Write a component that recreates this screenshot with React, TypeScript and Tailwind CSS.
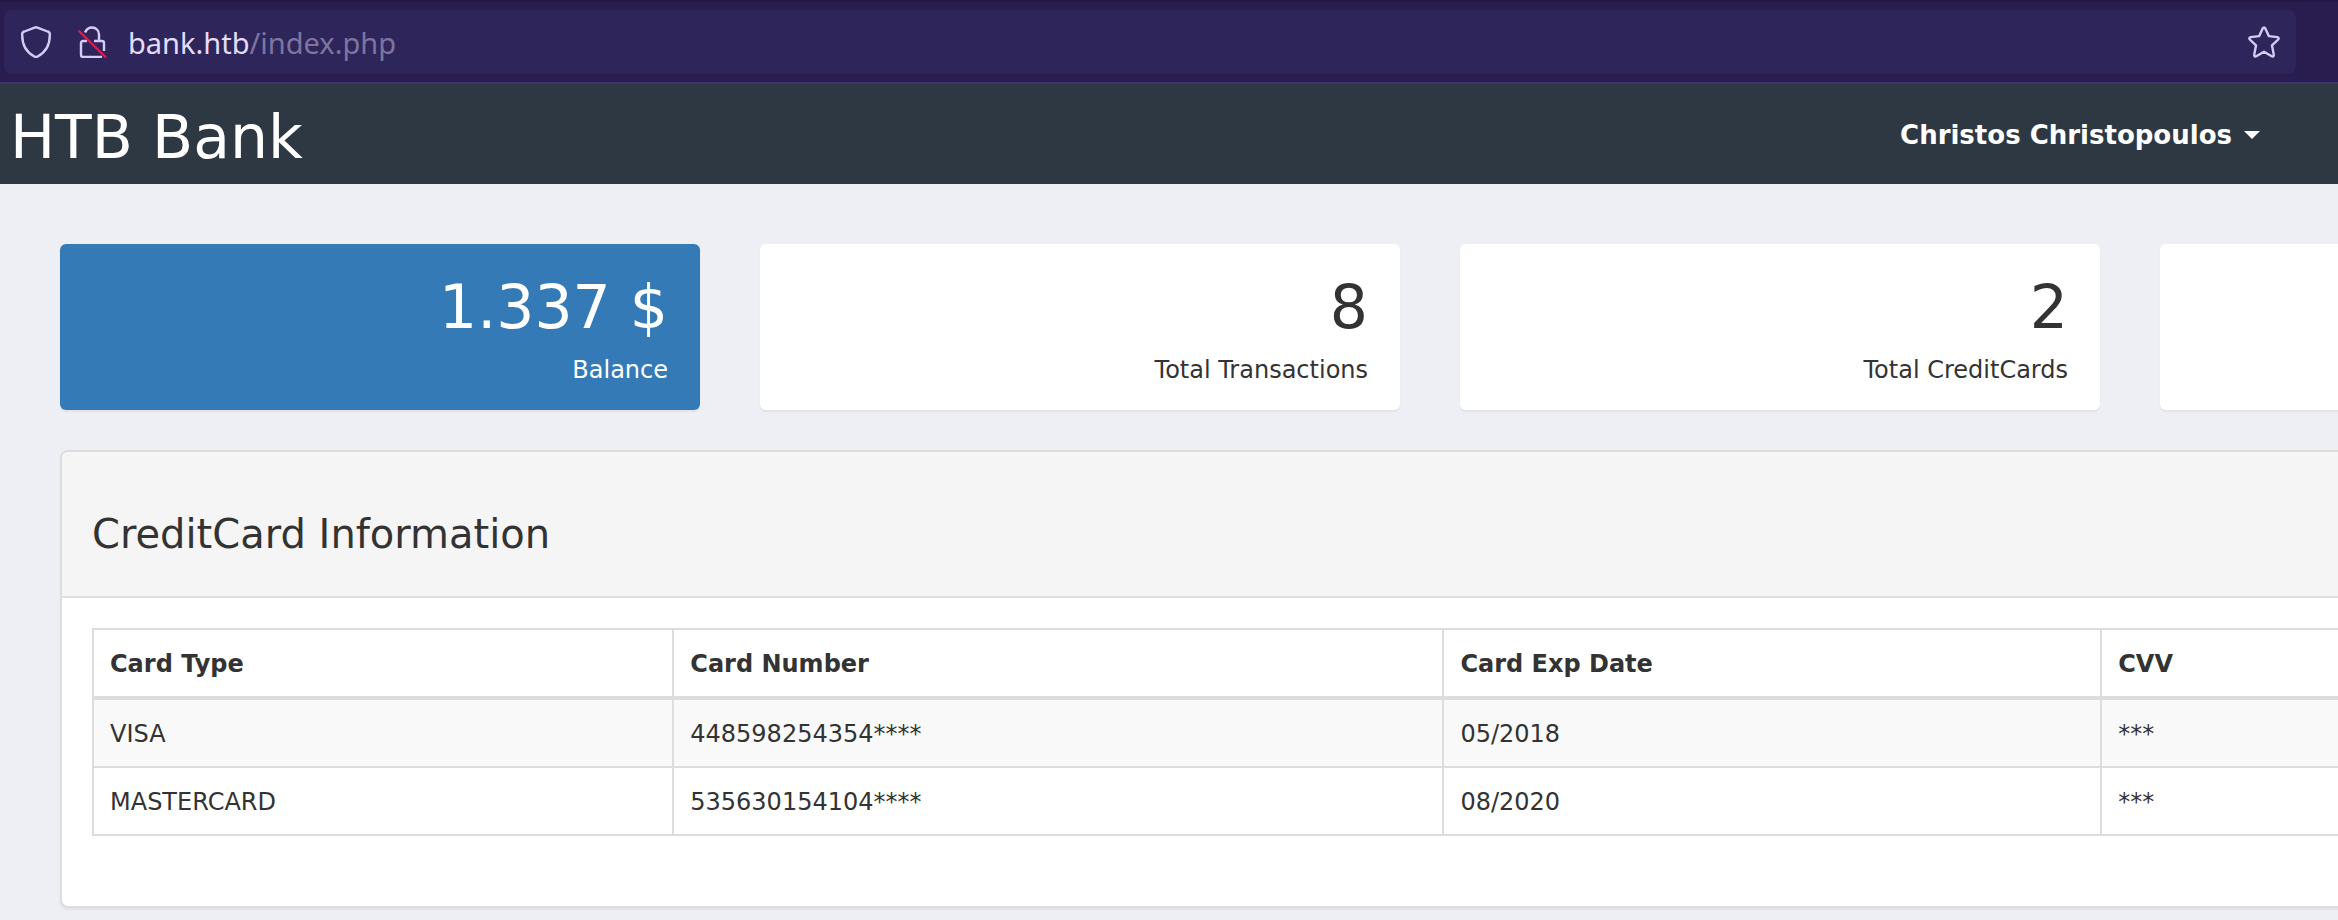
import React from "react";

const stats = [
  { value: "1.337 $", label: "Balance", primary: true },
  { value: "8", label: "Total Transactions", primary: false },
  { value: "2", label: "Total CreditCards", primary: false },
  { value: "", label: "", primary: false },
];

const cards = [
  { type: "VISA", number: "448598254354****", exp: "05/2018", cvv: "***" },
  { type: "MASTERCARD", number: "535630154104****", exp: "08/2020", cvv: "***" },
];

function ShieldIcon() {
  return (
    <svg viewBox="0 0 32 32" className="size-8" fill="none" stroke="currentColor" strokeWidth="2.4" strokeLinejoin="round" aria-hidden="true">
      <path d="M14.6 1.7a3 3 0 0 1 2.8 0L27.600 5.500a3 3 0 0 1 2.200 3C30 18 27 25.500 17.600 30.500a3 3 0 0 1-3.200 0C5 25.500 2 18 2.200 8.500a3 3 0 0 1 2.200-3Z" />
    </svg>
  );
}

function InsecureLockIcon() {
  return (
    <svg viewBox="0 0 32 32" className="size-8" fill="none" strokeWidth="2.4" aria-hidden="true">
      <g stroke="currentColor">
        <path d="M9 6.500C10.500 3 13 1.500 16 1.500c4 0 7 3 7 7V15" />
        <path d="M11 15H7a2 2 0 0 0-2 2v12a2 2 0 0 0 2 2h19" />
        <path d="M18 15h8a2 2 0 0 1 2 2v8" />
      </g>
      <path d="M2.500 4.500 30 31.500" stroke="#f5104a" strokeWidth="2.4" />
    </svg>
  );
}

function StarIcon() {
  return (
    <svg viewBox="0 0 32 32" className="size-8" fill="none" stroke="currentColor" strokeWidth="2.4" strokeLinejoin="round" aria-hidden="true">
      <path d="M14.700 2.400a1.500 1.500 0 0 1 2.600 0l3.500 7.700 8.600 1a1.400 1.400 0 0 1 .8 2.400l-6.200 5.900 1.800 9.400a1.400 1.400 0 0 1-2.100 1.500L16 25.700l-7.700 4.600a1.400 1.400 0 0 1-2.100-1.500L8 19.400l-6.200-5.900a1.400 1.400 0 0 1 .8-2.400l8.600-1Z" />
    </svg>
  );
}

export default function App() {
  return (
    <div className="min-h-screen overflow-hidden bg-[#edeff4] font-['DejaVu_Sans',sans-serif] text-2xl/[34px] text-[#333]">
      <div className="border-t-2 border-b-2 border-t-[#241a45] border-b-[#3b3470] bg-[#291d4f] pt-2 pr-[42px] pb-2 pl-1">
        <div className="flex h-16 items-center rounded-lg bg-[#2e255b] px-4 text-[#d5ccf5]">
          <button type="button" aria-label="Tracking protection" className="mr-6">
            <ShieldIcon />
          </button>
          <button type="button" aria-label="Connection not secure" className="mr-5">
            <InsecureLockIcon />
          </button>
          <div
            role="textbox"
            aria-label="Address"
            className="min-w-0 grow pt-0.5 font-['Noto_Sans',sans-serif] text-[29px]/[38px] text-[#7e759f]"
          >
            <span className="text-[#e3dcfb]">bank.htb</span>/index.php
          </div>
          <button type="button" aria-label="Bookmark this page">
            <StarIcon />
          </button>
        </div>
      </div>

      <header className="flex h-[100px] items-center justify-between bg-[#2e3842] pr-[78px] pl-[10px] text-white">
        <a href="#" className="pt-1.5 text-6xl/[66px]">
          HTB Bank
        </a>
        <button type="button" className="flex items-center gap-3 pt-0.5 text-[26px] font-bold">
          Christos Christopoulos
          <svg viewBox="0 0 16 8" className="h-2 w-4" fill="currentColor" aria-hidden="true">
            <path d="M0 0h16L8 8Z" />
          </svg>
        </button>
      </header>

      <main className="w-[122.33%] px-[60px] pt-[60px]">
        <section className="grid grid-cols-4 gap-[60px]">
          {stats.map((stat, i) => (
            <div
              key={i}
              className={
                stat.primary
                  ? "h-[166px] rounded-md bg-[#337ab7] px-8 pt-[30px] text-right text-white shadow-[0_2px_2px_rgba(0,0,0,0.05)]"
                  : "h-[166px] rounded-md bg-white px-8 pt-[30px] text-right shadow-[0_2px_2px_rgba(0,0,0,0.05)]"
              }
            >
              <div className="mb-[13px] text-6xl/[66px]">{stat.value}</div>
              <div>{stat.label}</div>
            </div>
          ))}
        </section>

        <section className="mt-10 overflow-hidden rounded-lg border-2 border-[#ddd] bg-white shadow-[0_2px_2px_rgba(0,0,0,0.05)]">
          <div className="border-b-2 border-[#ddd] bg-[#f5f5f5] px-[30px] pt-[60px] pb-10">
            <h3 className="text-[40px]/[44px]">CreditCard Information</h3>
          </div>
          <div className="px-[30px] pt-[30px] pb-[70px]">
            <table className="w-full table-fixed border-collapse text-left">
              <colgroup>
                <col className="w-[21.7%]" />
                <col className="w-[28.8%]" />
                <col className="w-[24.6%]" />
                <col />
              </colgroup>
              <thead>
                <tr>
                  {["Card Type", "Card Number", "Card Exp Date", "CVV"].map((title) => (
                    <th key={title} scope="col" className="border-2 border-b-4 border-[#ddd] px-4 pt-[17px] pb-[15px] font-bold">
                      {title}
                    </th>
                  ))}
                </tr>
              </thead>
              <tbody>
                {cards.map((card) => (
                  <tr key={card.type} className="odd:bg-[#f9f9f9]">
                    <td className="border-2 border-[#ddd] px-4 pt-[17px] pb-[15px]">{card.type}</td>
                    <td className="border-2 border-[#ddd] px-4 pt-[17px] pb-[15px]">{card.number}</td>
                    <td className="border-2 border-[#ddd] px-4 pt-[17px] pb-[15px]">{card.exp}</td>
                    <td className="border-2 border-[#ddd] px-4 pt-[17px] pb-[15px]">{card.cvv}</td>
                  </tr>
                ))}
              </tbody>
            </table>
          </div>
        </section>
      </main>
    </div>
  );
}
